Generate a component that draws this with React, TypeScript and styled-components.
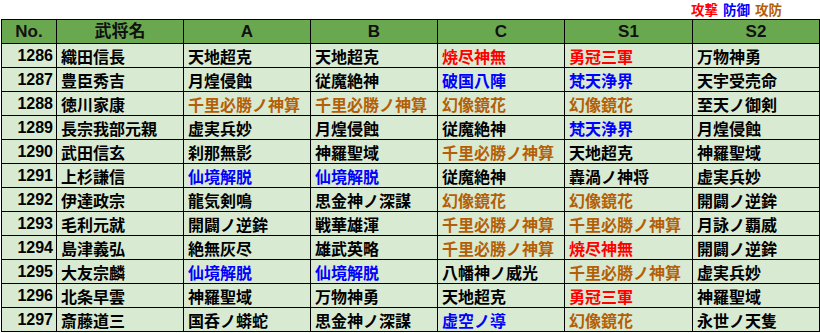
import React from "react";
import styled, { createGlobalStyle } from "styled-components";

const Global = createGlobalStyle`
  html, body { margin: 0; padding: 0; background: #ffffff; }
  body { font-family: "Liberation Sans", "Noto Sans CJK JP", sans-serif; }
`;

type Tone = "k" | "r" | "b" | "o";
const toneColor: Record<Tone, string> = {
  k: "#000000",
  r: "#ff0000",
  b: "#0000ff",
  o: "#b45f06",
};

const Page = styled.div`
  width: 820px;
  display: flex;
  flex-direction: column;
`;

const LegendBar = styled.div`
  height: 19px;
  display: flex;
  justify-content: flex-end;
  align-items: center;
  gap: 5px;
  padding-right: 38px;
  box-sizing: border-box;
`;

const LegendItem = styled.span<{ $tone: Tone }>`
  font-family: "Noto Sans CJK JP", sans-serif;
  font-weight: 700;
  font-size: 13.5px;
  line-height: 1;
  color: ${(p) => toneColor[p.$tone]};
`;

const Table = styled.table`
  margin-left: 1px;
  border-collapse: collapse;
  table-layout: fixed;
  width: 818px;
`;

const HeadCell = styled.th`
  background: #6aa84f;
  border: 1px solid #000;
  height: 23px;
  padding: 0;
  font-family: "Liberation Sans", "Noto Sans CJK JP", sans-serif;
  font-weight: 700;
  font-size: 17px;
  color: #111;
  text-align: center;
  vertical-align: middle;
  line-height: 1;
`;

const NumCell = styled.td`
  background: #d9ead3;
  border: 1px solid #000;
  height: 23px;
  padding: 0 3px 0 0;
  font-family: "Liberation Sans", sans-serif;
  font-weight: 700;
  font-size: 16px;
  text-align: right;
  vertical-align: middle;
  color: #000;
  line-height: 1;
`;

const TextCell = styled.td<{ $tone: Tone }>`
  background: #d9ead3;
  border: 1px solid #000;
  height: 23px;
  padding: 0 0 0 4px;
  font-family: "Noto Sans CJK JP", sans-serif;
  font-weight: 700;
  font-size: 16px;
  text-align: left;
  vertical-align: middle;
  white-space: nowrap;
  overflow: hidden;
  line-height: 1;
  color: ${(p) => toneColor[p.$tone]};
`;

type Skill = [string, Tone];
type Row = { no: number; name: string; skills: Skill[] };

const rows: Row[] = [
  { no: 1286, name: "織田信長", skills: [["天地超克", "k"], ["天地超克", "k"], ["焼尽神無", "r"], ["勇冠三軍", "r"], ["万物神勇", "k"]] },
  { no: 1287, name: "豊臣秀吉", skills: [["月煌侵蝕", "k"], ["従魔絶神", "k"], ["破国八陣", "b"], ["梵天浄界", "b"], ["天宇受売命", "k"]] },
  { no: 1288, name: "徳川家康", skills: [["千里必勝ノ神算", "o"], ["千里必勝ノ神算", "o"], ["幻像鏡花", "o"], ["幻像鏡花", "o"], ["至天ノ御剣", "k"]] },
  { no: 1289, name: "長宗我部元親", skills: [["虚実兵妙", "k"], ["月煌侵蝕", "k"], ["従魔絶神", "k"], ["梵天浄界", "b"], ["月煌侵蝕", "k"]] },
  { no: 1290, name: "武田信玄", skills: [["刹那無影", "k"], ["神羅聖域", "k"], ["千里必勝ノ神算", "o"], ["天地超克", "k"], ["神羅聖域", "k"]] },
  { no: 1291, name: "上杉謙信", skills: [["仙境解脱", "b"], ["仙境解脱", "b"], ["従魔絶神", "k"], ["轟渦ノ神将", "k"], ["虚実兵妙", "k"]] },
  { no: 1292, name: "伊達政宗", skills: [["龍気剣鳴", "k"], ["思金神ノ深謀", "k"], ["幻像鏡花", "o"], ["幻像鏡花", "o"], ["開闢ノ逆鉾", "k"]] },
  { no: 1293, name: "毛利元就", skills: [["開闢ノ逆鉾", "k"], ["戦華雄渾", "k"], ["千里必勝ノ神算", "o"], ["千里必勝ノ神算", "o"], ["月詠ノ覇威", "k"]] },
  { no: 1294, name: "島津義弘", skills: [["絶無灰尽", "k"], ["雄武英略", "k"], ["千里必勝ノ神算", "o"], ["焼尽神無", "r"], ["開闢ノ逆鉾", "k"]] },
  { no: 1295, name: "大友宗麟", skills: [["仙境解脱", "b"], ["仙境解脱", "b"], ["八幡神ノ威光", "k"], ["千里必勝ノ神算", "o"], ["虚実兵妙", "k"]] },
  { no: 1296, name: "北条早雲", skills: [["神羅聖域", "k"], ["万物神勇", "k"], ["天地超克", "k"], ["勇冠三軍", "r"], ["神羅聖域", "k"]] },
  { no: 1297, name: "斎藤道三", skills: [["国呑ノ蟒蛇", "k"], ["思金神ノ深謀", "k"], ["虚空ノ導", "b"], ["幻像鏡花", "o"], ["永世ノ天隻", "k"]] },
];

const colWidths = [55, 127, 127, 127, 127, 128, 127];
const headers = ["No.", "武将名", "A", "B", "C", "S1", "S2"];

export default function App() {
  return (
    <Page>
      <Global />
      <LegendBar>
        <LegendItem $tone="r">攻撃</LegendItem>
        <LegendItem $tone="b">防御</LegendItem>
        <LegendItem $tone="o">攻防</LegendItem>
      </LegendBar>
      <Table>
        <colgroup>
          {colWidths.map((w, i) => (
            <col key={i} style={{ width: w }} />
          ))}
        </colgroup>
        <thead>
          <tr>
            {headers.map((h) => (
              <HeadCell key={h}>{h}</HeadCell>
            ))}
          </tr>
        </thead>
        <tbody>
          {rows.map((r) => (
            <tr key={r.no}>
              <NumCell>{r.no}</NumCell>
              <TextCell $tone="k">{r.name}</TextCell>
              {r.skills.map(([s, t], i) => (
                <TextCell key={i} $tone={t}>
                  {s}
                </TextCell>
              ))}
            </tr>
          ))}
        </tbody>
      </Table>
    </Page>
  );
}
